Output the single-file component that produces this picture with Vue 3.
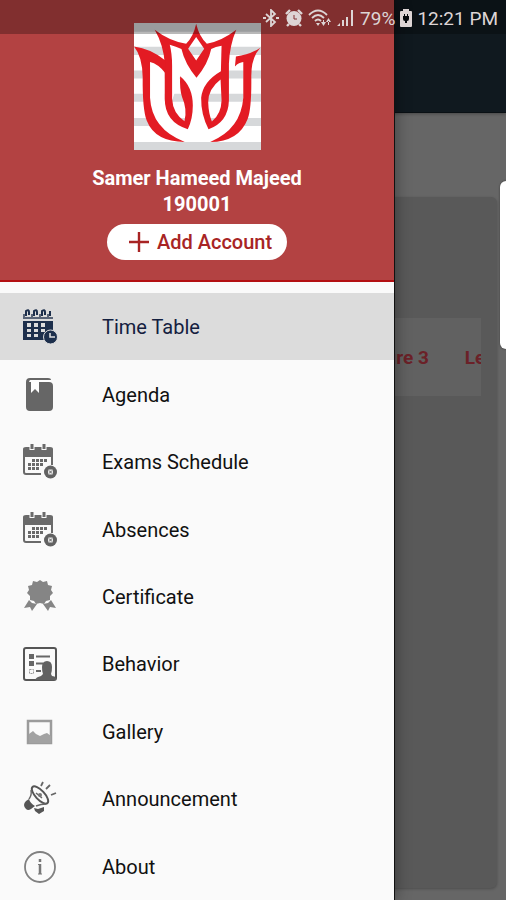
<script setup>
import { ref } from 'vue'

const items = [
  { id: 'timetable', label: 'Time Table' },
  { id: 'agenda', label: 'Agenda' },
  { id: 'exams', label: 'Exams Schedule' },
  { id: 'absences', label: 'Absences' },
  { id: 'certificate', label: 'Certificate' },
  { id: 'behavior', label: 'Behavior' },
  { id: 'gallery', label: 'Gallery' },
  { id: 'announcement', label: 'Announcement' },
  { id: 'about', label: 'About' }
]
const active = ref('timetable')
</script>

<template>
  <div class="screen">
    <main class="page">
      <div class="app-bar"></div>
      <section class="card">
        <div class="table-clip">
          <table class="lessons">
            <thead>
              <tr>
                <th scope="col">Lecture 3</th>
                <th scope="col">Lecture 4</th>
              </tr>
            </thead>
          </table>
        </div>
      </section>
    </main>

    <aside class="drawer">
      <header class="profile">
        <svg class="logo" viewBox="42 38 380 380" aria-hidden="true">
          <path fill="#fff" d="M42 38h380v380H42z" />
          <path fill="#d6d8da" d="M42 38h380v26H42zM42 109h380v25H42zM42 180h380v24H42zM42 250h380v24H42zM42 322h380v24H42zM42 394h380v24H42z" />
          <path fill="#fff" d="M150 100L195 118L228 200L262 118L306 100L302 190Q244 220 244 265L265 355L370 270V155L390 160L382 320Q340 385 270 392H190Q110 375 80 300L80 150L134 180V270L200 355L218 310L180 198L156 270Z" />
          <g fill="#e31b23" fill-rule="evenodd">
            <path d="M104 58Q148 92 198 100Q220 78 228 40Q237 78 260 100Q304 92 348 58Q328 105 326 160V270Q324 335 265 356Q242 312 243 262Q247 214 302 182L304 106Q286 108 273 116Q264 160 229 202Q194 160 184 116Q168 108 149 103Q156 130 156 165V265Q158 308 193 332Q202 296 186 260Q178 236 180 197Q218 228 218 285Q218 325 203 356Q134 335 134 265V160Q131 105 104 58ZM228 80L204 115L228 150L252 115ZM301 207Q264 235 264 275Q265 308 275 333Q303 310 304 270Z" />
            <path d="M42 108Q92 114 136 150V188Q113 160 90 155V262Q95 356 194 394Q105 394 80 330Q67 295 68 200Q67 138 42 108Z" />
            <path d="M420 112Q392 142 393 200Q394 295 382 325Q356 393 270 394Q362 356 369 262V155Q356 156 344 168L347 138Q386 134 420 112Z" />
          </g>
        </svg>
        <p class="name">Samer Hameed Majeed</p>
        <p class="name">190001</p>
        <button class="add" type="button">
          <svg class="plus" viewBox="0 0 20 20" aria-hidden="true">
            <path d="M10 0v20M0 10h20" stroke="currentColor" stroke-width="2.4" />
          </svg>
          Add Account
        </button>
      </header>

      <nav class="menu">
        <a
          v-for="item in items"
          :key="item.id"
          href="#"
          class="item"
          :class="{ active: item.id === active }"
          @click.prevent="active = item.id"
        >
          <svg v-if="item.id === 'timetable'" class="icon" viewBox="0 0 36 36" aria-hidden="true">
            <path fill="#1d2f4c" fill-rule="evenodd" d="M1 12h30v11a7 7 0 0 0-8 8H1zM5 14v4h4v-4zM12 14v4h4v-4zM19 14v4h4v-4zM5 20v3h4v-3zM12 20v3h4v-3zM19 20v3h4v-3zM5 25v3h4v-3zM12 25v3h4v-3z" />
            <path d="M2 10V5M10 10V5M18 10V5M26 10V5M1 9h30" stroke="#596477" stroke-width="2" />
            <path d="M4 7V2q3-2 3 1v3M12 7V2q3-2 3 1v3M20 7V2q3-2 3 1v3M28 7V2" fill="none" stroke="#1d2f4c" stroke-width="2" />
            <circle cx="28.500" cy="28" r="7" fill="#1d2f4c" stroke="#dcdcdc" stroke-width="1" />
            <path d="M28 24v4h5" fill="none" stroke="#dcdcdc" stroke-width="1.600" />
          </svg>

          <svg v-else-if="item.id === 'agenda'" class="icon" viewBox="0 0 36 36" aria-hidden="true">
            <path fill="#666" d="M8 1h18q3 0 3 2H9q-2 0-2 2h20q4 0 4 4v21q0 4-4 4H8q-4 0-4-4V5q0-4 4-4z" />
            <path fill="#fff" d="M9 5h8v11l-4-4-4 4z" />
            <path fill="#fff" d="M8 3h21v2H8z" opacity="0.800" />
          </svg>

          <svg v-else-if="item.id === 'exams' || item.id === 'absences'" class="icon" viewBox="0 0 36 36" aria-hidden="true">
            <path fill="#6a6a6a" fill-rule="evenodd" d="M4 3h24q3 0 3 2v16h-2v-8H3v15q0 1 1 1h15v2H4q-3 0-3-3V5q0-2 3-2z" />
            <path d="M10 0v6M22 0v6" stroke="#fafafa" stroke-width="5" />
            <path d="M10 0v5M22 0v5" stroke="#6a6a6a" stroke-width="3" />
            <path d="M10 16.500h16M6 20.500h16M6 24.500h12" stroke="#6a6a6a" stroke-width="3" stroke-dasharray="3 1" />
            <circle cx="28.500" cy="28" r="6.500" fill="#626262" />
            <rect x="26" y="25.500" width="5" height="5" rx="1" fill="#e8e8e8" />
            <path d="M27 26.500l3 3M30 26.500l-3 3" stroke="#626262" stroke-width="1" />
          </svg>

          <svg v-else-if="item.id === 'certificate'" class="icon" viewBox="0 0 36 36" aria-hidden="true">
            <path fill="#858585" d="M18 1l3 2 4-1 1 4 4 1-1 4 2 3-3 3v4l-4 1-2 3-4-1-4 1-2-3-4-1v-4l-3-3 2-3-1-4 4-1 1-4 4 1z" />
            <path fill="#858585" d="M7 21l3 3 5 1-5 7-2-4-6 1zM29 21l-3 3-5 1 5 7 2-4 6 1z" />
          </svg>

          <svg v-else-if="item.id === 'behavior'" class="icon" viewBox="0 0 36 36" aria-hidden="true">
            <rect x="2" y="2" width="32" height="32" rx="2" fill="none" stroke="#555" stroke-width="2" />
            <path fill="#666" d="M7 8h5v5H7zM7 15h5v5H7z" />
            <path d="M14 10.500h14M14 17.500h7M14 25h5" stroke="#666" stroke-width="2" />
            <path d="M7.500 23.500h4v4h-4z" fill="none" stroke="#999" stroke-dasharray="2 1" />
            <path fill="#626262" d="M13 34q1-3 6-4l2-2q-1-2-1-7 0-6 5-6t5 6q0 5-1 7l1 2q3 0 4 2v2z" />
          </svg>

          <svg v-else-if="item.id === 'gallery'" class="icon" viewBox="0 0 36 36" aria-hidden="true">
            <rect x="6" y="7" width="23" height="22" fill="none" stroke="#9b9b9b" stroke-width="2.500" />
            <path fill="#a2a2a2" d="M7 20l4-3 3 3 4 2 4-2 3-1 4 3v7H7z" />
          </svg>

          <svg v-else-if="item.id === 'announcement'" class="icon" viewBox="0 0 36 36" aria-hidden="true">
            <path fill="#555" d="M4 20q-4 4 0 8 2 2 5 0l4-3q-5-3-6-7z" />
            <ellipse cx="18" cy="14" rx="4.500" ry="11" transform="rotate(-43 18 14)" fill="#fafafa" stroke="#555" stroke-width="2" />
            <path d="M9 9q1 5-2 9M14 25q5-2 10-2M14 12l6 5" fill="none" stroke="#666" stroke-width="1.500" />
            <circle cx="18" cy="14" r="2" fill="#777" />
            <path fill="#555" d="M12 27l4 1 6-2v4l-5 3-4-3z" />
            <path d="M19 5l2-4M24 8l4-4M29 14l5-2" stroke="#666" stroke-width="1.800" />
          </svg>

          <svg v-else class="icon" viewBox="0 0 36 36" aria-hidden="true">
            <circle cx="18" cy="18" r="15" fill="none" stroke="#808080" stroke-width="1.800" />
            <path d="M18 10v3M18 15v10" stroke="#777" stroke-width="2.500" />
            <path d="M16 15.500h2M16 25h4" stroke="#777" stroke-width="1" />
          </svg>
          <span>{{ item.label }}</span>
        </a>
      </nav>
    </aside>

    <div class="status">
      <svg class="glyph" viewBox="0 0 16 18" aria-hidden="true">
        <path d="M3 5l9 8-4 4V1l4 4-9 8" fill="none" stroke="currentColor" stroke-width="1.800" />
        <path d="M0 9h3M13 9h3" stroke="currentColor" stroke-width="2" />
      </svg>
      <svg class="glyph" viewBox="0 0 18 18" aria-hidden="true">
        <circle cx="9" cy="9.500" r="7.500" fill="currentColor" />
        <path d="M1 5l4-4M17 5l-4-4M4 15l-2 2M14 15l2 2" stroke="currentColor" stroke-width="2.400" />
        <path d="M9 6v4h3" fill="none" stroke="#823132" stroke-width="1" />
      </svg>
      <svg class="glyph wide" viewBox="0 0 24 18" aria-hidden="true">
        <path d="M1 6q9-9 18 0M4 9q6-6 12 0M7 12q3-3 6 0" fill="none" stroke="currentColor" stroke-width="1.800" />
        <path d="M8 14h4l-2 3zM13 13h5l-2.500 4zM18 13h5l-2.500-4zM15 11h1v3h-1zM20 12h1v4h-1z" fill="currentColor" />
      </svg>
      <svg class="glyph" viewBox="0 0 18 18" aria-hidden="true">
        <path d="M0 17l3-3v3zM5 11h2v6H5zM9 8h2v9H9zM14 1h2v16h-2z" fill="currentColor" />
      </svg>
      <span>79%</span>
      <svg class="glyph cell" viewBox="0 0 12 18" aria-hidden="true">
        <path fill="currentColor" d="M3 0h6v2h2q1 0 1 1v14q0 1-1 1H1q-1 0-1-1V3q0-1 1-1h2z" />
        <path fill="#05090c" d="M4 5h1v2h2V5h1v2h1v3q0 2-2 2v2H5v-2q-2 0-2-2V7h1z" />
      </svg>
      <span>12:21 PM</span>
    </div>
    <div class="edge-handle"></div>
  </div>
</template>

<style>
body {
  margin: 0;
}
</style>

<style scoped>
.screen {
  position: relative;
  display: grid;
  min-height: 100vh;
  overflow: hidden;
  background: #666;
  font-family: Roboto, "Liberation Sans", sans-serif;
  font-size: 19px;
}
.page,
.drawer {
  grid-area: 1 / 1;
  min-width: 0;
}
.page {
  display: flex;
  flex-direction: column;
  padding-bottom: 12px;
}
.app-bar {
  height: 112px;
  background: #10191f;
  border-bottom: 1px solid #0a1014;
  box-shadow: 0 1px 3px rgba(0, 0, 0, 0.3);
}
.card {
  flex: 1;
  margin: 84px 9px 0;
  padding: 121px 16px 0;
  border-radius: 6px;
  background: #595959;
  box-shadow: 0 1px 3px rgba(0, 0, 0, 0.25);
}
.table-clip {
  display: flex;
  justify-content: flex-end;
  overflow: hidden;
  background: #616161;
}
.lessons {
  margin-right: -64px;
  border-collapse: collapse;
  color: #6b2128;
}
.lessons th {
  height: 78px;
  padding: 0 0 0 36px;
  font-weight: 700;
  white-space: nowrap;
}
.drawer {
  display: flex;
  flex-direction: column;
  margin-right: 112px;
  z-index: 1;
  background: #fafafa;
  box-shadow: 1px 0 0 #111, 2px 0 14px rgba(0, 0, 0, 0.35);
}
.profile {
  display: flex;
  flex-direction: column;
  align-items: center;
  padding: 23px 0 20px;
  border-bottom: 2px solid #b30f12;
  background: #b34242;
  color: #fff;
}
.logo {
  width: 127px;
  height: 127px;
  margin-bottom: 15px;
}
.name {
  margin: 0;
  font-size: 20px;
  line-height: 26px;
  font-weight: 700;
}
.add {
  display: flex;
  align-items: center;
  gap: 8px;
  height: 36px;
  margin-top: 7px;
  padding: 0 15px 0 22px;
  border: 0;
  border-radius: 18px;
  background: #fff;
  color: #a82424;
  font: inherit;
  font-size: 20px;
  font-weight: 500;
}
.plus {
  width: 20px;
  height: 20px;
}
.menu {
  display: flex;
  flex: 1;
  flex-direction: column;
  padding-top: 11px;
}
.item {
  display: flex;
  flex: 1;
  align-items: center;
  gap: 44px;
  min-height: 48px;
  padding: 1px 22px 0;
  color: #111;
  font-size: 20px;
  font-weight: 400;
  text-decoration: none;
}
.item.active {
  background: #dcdcdc;
  color: #14203f;
}
.icon {
  flex: none;
  width: 36px;
  height: 36px;
}
.status {
  position: absolute;
  inset: 0 0 auto;
  z-index: 2;
  display: flex;
  align-items: center;
  justify-content: flex-end;
  gap: 5px;
  height: 34px;
  padding: 2px 8px 0 0;
  box-sizing: border-box;
  background: rgba(0, 0, 0, 0.28);
  color: #ddd5d5;
}
.glyph {
  width: 18px;
  height: 18px;
}
.glyph.wide {
  width: 24px;
}
.glyph.cell {
  width: 12px;
}
.edge-handle {
  position: absolute;
  top: 181px;
  right: 0;
  z-index: 2;
  width: 6px;
  height: 168px;
  border-radius: 6px 0 0 6px;
  background: #fff;
  box-shadow: 0 0 2px #333;
}
</style>
